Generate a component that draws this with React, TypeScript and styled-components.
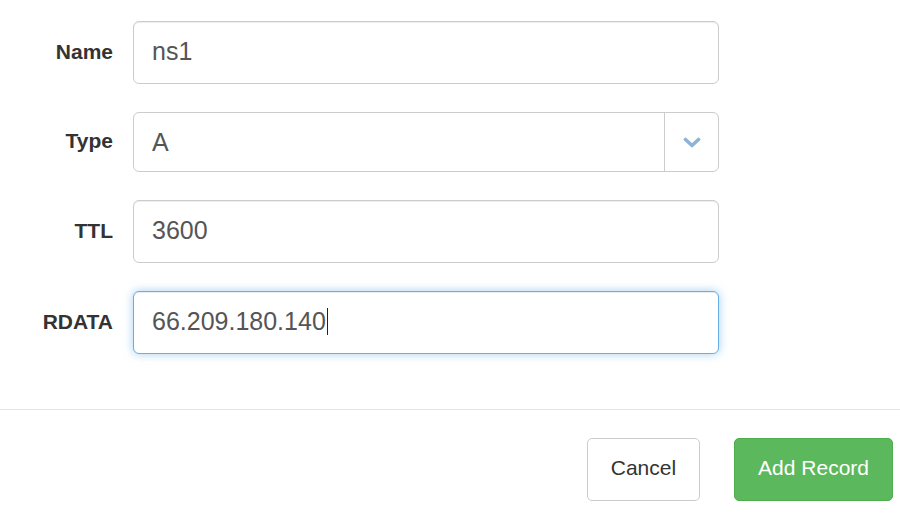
import { createGlobalStyle } from 'styled-components';
import styled from 'styled-components';

const GlobalStyle = createGlobalStyle`
  html, body {
    margin: 0;
    padding: 0;
    background: #fff;
    font-family: 'Liberation Sans', Arial, Helvetica, sans-serif;
    color: #333;
  }
`;

interface FieldDef {
  label: string;
  value: string;
  kind?: 'text' | 'select';
  focused?: boolean;
}

const fields: FieldDef[] = [
  { label: 'Name', value: 'ns1' },
  { label: 'Type', value: 'A', kind: 'select' },
  { label: 'TTL', value: '3600' },
  { label: 'RDATA', value: '66.209.180.140', focused: true },
];

const Chevron = () => (
  <svg width='18' height='12' viewBox='0 0 18 12'>
    <path
      d='M2.5 2.5 L9 8.5 L15.5 2.5'
      fill='none'
      stroke='#8fb3d6'
      strokeWidth='3.6'
      strokeLinecap='round'
      strokeLinejoin='round'
    />
  </svg>
);

const App = () => {
  return (
    <>
      <GlobalStyle />
      <Modal>
        <FormBody>
          {fields.map(field => (
            <FormRow key={field.label}>
              <Label>{field.label}</Label>
              {field.kind === 'select' ? (
                <SelectBox>
                  <InputText>{field.value}</InputText>
                  <SelectToggle>
                    <Chevron />
                  </SelectToggle>
                </SelectBox>
              ) : (
                <InputBox focused={field.focused}>
                  <InputText>
                    {field.value}
                    {field.focused ? <Caret /> : null}
                  </InputText>
                </InputBox>
              )}
            </FormRow>
          ))}
        </FormBody>
        <Footer>
          <Button>Cancel</Button>
          <Button primary>Add Record</Button>
        </Footer>
      </Modal>
    </>
  );
};

export default App;

const Modal = styled.div`
  width: 900px;
  height: 520px;
  overflow: hidden;
  background: #fff;
`;

const FormBody = styled.div`
  display: flex;
  flex-direction: column;
  gap: 28px;
  padding: 21px 0 55px;
`;

const FormRow = styled.div`
  display: grid;
  grid-template-columns: 113px 586px;
  column-gap: 20px;
  align-items: center;
`;

const Label = styled.label`
  text-align: right;
  font-size: 21px;
  font-weight: bold;
  color: #333;
  margin-top: -2px;
`;

const InputBox = styled.div<{ focused?: boolean }>`
  box-sizing: border-box;
  height: 63px;
  display: flex;
  align-items: center;
  padding: 0 18px 2px;
  border: 1px solid ${({ focused }) => (focused ? '#66afe9' : '#cccccc')};
  border-radius: 6px;
  background: #fff;
  box-shadow: ${({ focused }) =>
    focused
      ? 'inset 0 1px 1px rgba(0,0,0,.075), 0 0 10px rgba(102,175,233,.6)'
      : 'inset 0 1px 1px rgba(0,0,0,.075)'};
`;

const SelectBox = styled.div`
  box-sizing: border-box;
  height: 60px;
  display: flex;
  align-items: center;
  padding-left: 18px;
  border: 1px solid #cccccc;
  border-radius: 6px;
  background: #fff;
  & > span:first-child {
    flex: 1;
  }
`;

const SelectToggle = styled.div`
  align-self: stretch;
  width: 53px;
  border-left: 1px solid #cccccc;
  display: flex;
  align-items: center;
  justify-content: center;
  padding-top: 1px;
`;

const InputText = styled.span`
  font-size: 25px;
  color: #555;
  display: flex;
  align-items: center;
`;

const Caret = styled.span`
  display: inline-block;
  width: 1.5px;
  height: 27px;
  background: #222;
  margin-left: 1px;
`;

const Footer = styled.div`
  display: flex;
  justify-content: flex-end;
  gap: 34px;
  padding: 28px 7px 0 0;
  border-top: 1px solid #e5e5e5;
`;

const Button = styled.button<{ primary?: boolean }>`
  box-sizing: border-box;
  height: 63px;
  padding: 0 23px 4px;
  font-family: 'Liberation Sans', Arial, Helvetica, sans-serif;
  font-size: 21px;
  border-radius: 5px;
  cursor: pointer;
  color: ${({ primary }) => (primary ? '#fff' : '#333')};
  background: ${({ primary }) => (primary ? '#5cb85c' : '#fff')};
  border: 1px solid ${({ primary }) => (primary ? '#4cae4c' : '#cccccc')};
`;
